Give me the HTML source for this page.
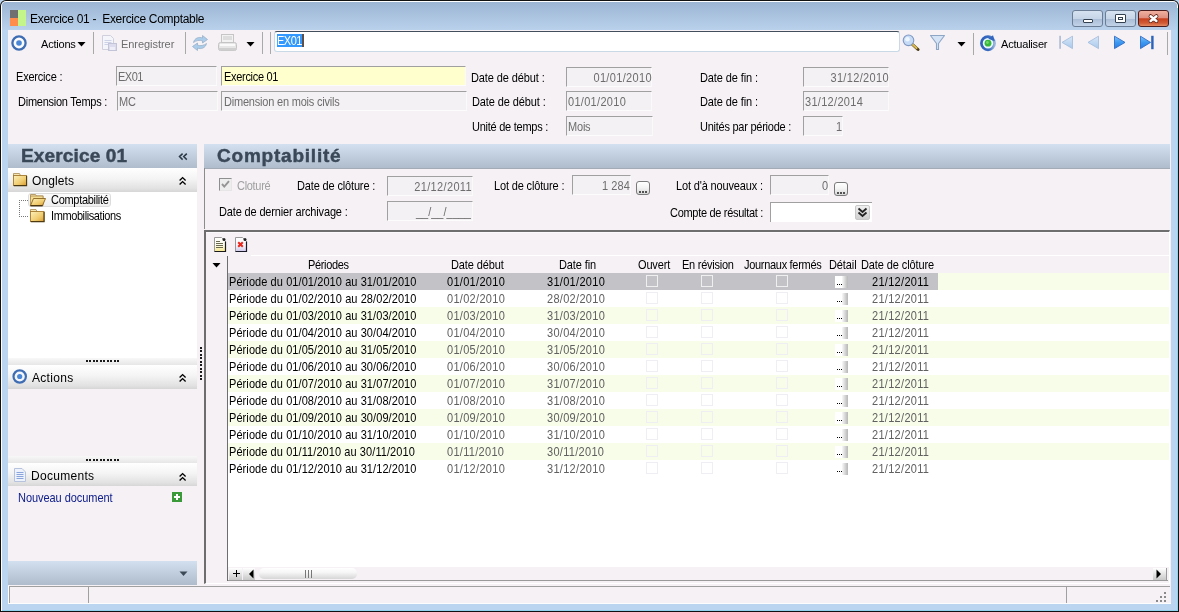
<!DOCTYPE html>
<html><head><meta charset="utf-8">
<style>
html,body{margin:0;padding:0}
body{width:1179px;height:612px;overflow:hidden;position:relative;background:#bbd4ef;font-family:"Liberation Sans",sans-serif;font-size:11px;color:#000}
.a{position:absolute}
.t{position:absolute;white-space:pre;line-height:12px;font-size:11px;will-change:transform;transform:scaleY(1.1);transform-origin:0 10px}
.g{color:#6d6d6d}
.box{position:absolute;box-sizing:border-box;border-top:1px solid #a0a0a0;border-left:1px solid #a0a0a0;border-right:1px solid #fbfafb;border-bottom:1px solid #fdfcfd;background:#f4f1f4}
.hdr{position:absolute;background:linear-gradient(#d3e0ef,#aebccc);}
.sec{position:absolute;background:linear-gradient(#ffffff 0%,#f4f4f4 45%,#e2e2e2 85%,#d6d6d6 100%)}
.sep{position:absolute;width:1px;background:#a9a9a9}
</style></head><body>
<!-- outer frame -->
<div class="a" style="left:0;top:0;width:1179px;height:612px;background:#111;border-radius:6px 6px 0 0"></div>
<div class="a" style="left:1px;top:1px;width:1177px;height:610px;background:#ffffff;border-radius:5px 5px 0 0"></div>
<div class="a" style="left:2px;top:2px;width:1175px;height:608px;background:#bbd4ef;border-radius:4px 4px 0 0"></div>
<div class="a" style="left:2px;top:2px;width:1175px;height:28px;background:linear-gradient(#9cb5d3,#b9d1eb);border-radius:4px 4px 0 0"></div>
<div class="a" style="left:1177px;top:8px;width:1px;height:603px;background:#8fd3ec"></div>
<div class="a" style="left:2px;top:610px;width:1176px;height:1px;background:#8fd3ec"></div>

<!-- title -->
<div class="a" style="left:10px;top:10px;width:8px;height:8px;background:#707070"></div>
<div class="a" style="left:10px;top:18px;width:8px;height:8px;background:#ff8c4a"></div>
<div class="a" style="left:18px;top:10px;width:8px;height:16px;background:#c4f58a"></div>
<div class="t" style="transform:none;left:30px;top:13px;font-size:12px;line-height:13px;letter-spacing:-0.3px;color:#000">Exercice 01 -  Exercice Comptable</div>

<!-- content bg -->
<div class="a" style="left:8px;top:30px;width:1163px;height:574px;background:#f5f1f5"></div>


<!-- toolbar -->
<svg class="a" style="left:10px;top:34px" width="18" height="18" viewBox="0 0 18 18">
 <circle cx="9" cy="9" r="6.6" fill="#fbfbfd" stroke="#3e6db3" stroke-width="2.3"/>
 <circle cx="9" cy="9" r="2.8" fill="#4a86d6"/>
</svg>
<div class="t" style="transform:none;left:41px;top:38px;letter-spacing:-0.2px">Actions</div>
<svg class="a" style="left:77px;top:42px" width="9" height="5"><polygon points="0.5,0 8.5,0 4.5,4.5" fill="#000"/></svg>
<div class="sep" style="left:93px;top:32px;height:22px"></div>
<svg class="a" style="left:100px;top:34px" width="18" height="18" viewBox="0 0 18 18">
 <path d="M2.5 1.5h8l3 3v11h-11z" fill="#f4f4fb" stroke="#d0d0dc"/>
 <path d="M4.5 6.5h7M4.5 8.5h7M4.5 10.5h4" stroke="#cdd2e6"/>
 <rect x="8.5" y="9.5" width="8" height="7" fill="#dcdcee" stroke="#c4c4d8"/>
 <rect x="10" y="13" width="5" height="3" fill="#eeeef8"/>
</svg>
<div class="t g" style="transform:none;left:121px;top:38px;letter-spacing:-0.05px">Enregistrer</div>
<div class="sep" style="left:185px;top:32px;height:22px"></div>
<svg class="a" style="left:191px;top:34px" width="18" height="18" viewBox="0 0 18 18">
 <path d="M2.5 8.5 C3.5 4 8 2.5 11.5 4 L11.5 1.5 L16.5 5.5 L11.5 9 L11.5 6.8 C8.5 5.8 5 6.5 2.5 8.5z" fill="#a9cdea" stroke="#9bb0c8" stroke-width="0.8"/>
 <path d="M15.5 9.5 C14.5 14 10 15.5 6.5 14 L6.5 16.5 L1.5 12.5 L6.5 9 L6.5 11.2 C9.5 12.2 13 11.5 15.5 9.5z" fill="#a9cdea" stroke="#9bb0c8" stroke-width="0.8"/>
</svg>
<svg class="a" style="left:218px;top:34px" width="19" height="18" viewBox="0 0 19 18">
 <rect x="3.5" y="0.5" width="12" height="8" fill="#f2f2f2" stroke="#c6c6c6"/>
 <rect x="5" y="2" width="9" height="4" fill="#dddddd"/>
 <rect x="0.5" y="8.5" width="18" height="8" rx="2" fill="#e6e6e6" stroke="#c4c4c4"/>
 <rect x="2" y="10" width="15" height="2" fill="#fafafa"/>
 <rect x="1" y="14" width="17" height="2.5" fill="#cfcfcf"/>
</svg>
<svg class="a" style="left:246px;top:42px" width="9" height="5"><polygon points="0.5,0 8.5,0 4.5,4.5" fill="#000"/></svg>
<div class="sep" style="left:262px;top:32px;height:22px"></div>
<div class="sep" style="left:270px;top:32px;height:22px"></div>
<div class="a" style="left:274px;top:31px;width:626px;height:21px;box-sizing:border-box;background:#fff;border:1px solid #c9d9e6;border-top-color:#434e5c;border-radius:3px"></div>
<div class="a" style="left:277px;top:34px;width:26px;height:13px;background:#3399ff"></div>
<div class="a" style="left:302px;top:34px;width:2px;height:13px;background:#5e5048"></div>
<div class="t" style="left:277px;top:35px;color:#fff;letter-spacing:-0.5px;font-size:11px">EX01</div>
<svg class="a" style="left:901px;top:33px" width="19" height="19" viewBox="0 0 19 19">
 <line x1="11.5" y1="11.5" x2="17" y2="16.5" stroke="#4b3a14" stroke-width="3" stroke-linecap="round"/>
 <line x1="11" y1="11" x2="15.5" y2="15" stroke="#d8b850" stroke-width="2.2" stroke-linecap="round"/>
 <circle cx="7.5" cy="7.3" r="5.3" fill="#c6dcf6" stroke="#7f98c2" stroke-width="1.1"/>
 <circle cx="6.5" cy="6.3" r="2.3" fill="#eef6ff"/>
</svg>
<svg class="a" style="left:929px;top:34px" width="17" height="17" viewBox="0 0 17 17">
 <path d="M1.5 1.5 H15.5 L9.5 9.5 V15.5 H7.5 V9.5 Z" fill="#d4e4f6" stroke="#8ea6c6" stroke-width="1.1" stroke-linejoin="round"/>
</svg>
<svg class="a" style="left:957px;top:42px" width="9" height="5"><polygon points="0.5,0 8.5,0 4.5,4.5" fill="#000"/></svg>
<div class="sep" style="left:973px;top:33px;height:22px"></div>
<svg class="a" style="left:979px;top:34px" width="18" height="18" viewBox="0 0 18 18">
 <defs><linearGradient id="rg" x1="0" y1="0" x2="1" y2="0"><stop offset="0" stop-color="#2f60b8"/><stop offset="0.6" stop-color="#3a6cc2"/><stop offset="1" stop-color="#9ab6da"/></linearGradient></defs>
 <circle cx="9" cy="9.2" r="6.6" fill="#eaf6ff" stroke="url(#rg)" stroke-width="2.7"/>
 <polygon points="14,1.2 9.2,4.8 15.8,7.2" fill="#3466c0"/>
 <circle cx="9" cy="9.2" r="3.4" fill="#38b83a"/>
 <circle cx="8.4" cy="8.5" r="1.4" fill="#72d86c"/>
</svg>
<div class="t" style="transform:none;left:1001px;top:38px;letter-spacing:-0.2px">Actualiser</div>
<svg class="a" style="left:1058px;top:35px" width="16" height="16" viewBox="0 0 16 16">
 <defs>
 <linearGradient id="na" x1="0" y1="0" x2="0" y2="1"><stop offset="0" stop-color="#7fc2fb"/><stop offset="0.5" stop-color="#3d9af0"/><stop offset="1" stop-color="#2a7ae0"/></linearGradient>
 <linearGradient id="nd" x1="0" y1="0" x2="0" y2="1"><stop offset="0" stop-color="#d8e8f8"/><stop offset="1" stop-color="#a8c8ec"/></linearGradient>
 </defs>
 <rect x="1.2" y="0.8" width="1.8" height="13" fill="#b4c0d8"/>
 <polygon points="14.5,1.2 14.5,13.6 4,7.4" fill="url(#nd)" stroke="#a6bede" stroke-width="0.9" stroke-linejoin="round"/>
</svg>
<svg class="a" style="left:1086px;top:35px" width="16" height="16" viewBox="0 0 16 16">
 <polygon points="12.5,1.2 12.5,13.6 2,7.4" fill="url(#nd)" stroke="#a6bede" stroke-width="0.9" stroke-linejoin="round"/>
</svg>
<svg class="a" style="left:1112px;top:35px" width="16" height="16" viewBox="0 0 16 16">
 <polygon points="2.5,1.2 2.5,13.6 13,7.4" fill="url(#na)" stroke="#2f6cc4" stroke-width="0.9" stroke-linejoin="round"/>
</svg>
<svg class="a" style="left:1139px;top:35px" width="17" height="16" viewBox="0 0 17 16">
 <polygon points="1.5,1.2 1.5,13.6 11.5,7.4" fill="url(#na)" stroke="#2f6cc4" stroke-width="0.9" stroke-linejoin="round"/>
 <rect x="12.2" y="0.8" width="2.4" height="13.4" fill="#2a62bc"/>
</svg>
<div class="sep" style="left:1167px;top:32px;height:23px"></div>

<!-- window buttons -->
<div class="a" style="left:1072px;top:10px;width:31px;height:17px;box-sizing:border-box;border:1px solid #6c7e96;border-radius:3px;background:linear-gradient(#d6e2f0 0%,#c6d5e7 50%,#a9bcd5 52%,#c2d3e8 100%)"></div>
<div class="a" style="left:1083px;top:19px;width:10px;height:4px;box-sizing:border-box;border:1px solid #33404f;background:#fff;border-radius:1px"></div>
<div class="a" style="left:1105px;top:10px;width:31px;height:17px;box-sizing:border-box;border:1px solid #6c7e96;border-radius:3px;background:linear-gradient(#d6e2f0 0%,#c6d5e7 50%,#a9bcd5 52%,#c2d3e8 100%)"></div>
<div class="a" style="left:1115px;top:14px;width:11px;height:9px;box-sizing:border-box;border:1px solid #33404f;background:#fff;border-radius:1px"></div>
<div class="a" style="left:1118px;top:17px;width:5px;height:3px;box-sizing:border-box;border:1px solid #33404f"></div>
<div class="a" style="left:1138px;top:10px;width:31px;height:17px;box-sizing:border-box;border:1px solid #4a1e1e;border-radius:3px;background:linear-gradient(#f0b0a0 0%,#e09080 45%,#c8401e 52%,#d05a34 80%,#e48a64 100%)"></div>
<svg class="a" style="left:1147px;top:13px" width="13" height="11" viewBox="0 0 13 11">
 <path d="M3.6 3.2 L9.4 8 M9.4 3.2 L3.6 8" stroke="#5a2418" stroke-width="4" stroke-linecap="round"/>
 <path d="M3.6 3.2 L9.4 8 M9.4 3.2 L3.6 8" stroke="#ffffff" stroke-width="2.5" stroke-linecap="round"/>
</svg>


<!-- form -->
<div class="t" style="left:16px;top:71px;letter-spacing:-0.2px">Exercice :</div>
<div class="t" style="left:18px;top:96px;letter-spacing:-0.25px">Dimension Temps :</div>
<div class="box" style="left:116px;top:66px;width:101px;height:20px"></div>
<div class="t g" style="left:118px;top:71px;letter-spacing:-0.5px">EX01</div>
<div class="box" style="left:117px;top:91px;width:101px;height:20px"></div>
<div class="t g" style="left:119px;top:96px;letter-spacing:-0.2px">MC</div>
<div class="box" style="left:221px;top:66px;width:245px;height:20px;background:#ffffcd"></div>
<div class="t" style="left:224px;top:71px;letter-spacing:-0.3px">Exercice 01</div>
<div class="box" style="left:221px;top:91px;width:246px;height:20px"></div>
<div class="t g" style="left:224px;top:96px;letter-spacing:-0.2px">Dimension en mois civils</div>

<div class="t" style="left:471px;top:72px;letter-spacing:-0.1px">Date de début :</div>
<div class="t" style="left:472px;top:96px;letter-spacing:-0.1px">Date de début :</div>
<div class="t" style="left:472px;top:121px;letter-spacing:-0.25px">Unité de temps :</div>
<div class="box" style="left:566px;top:67px;width:86px;height:20px"></div>
<div class="t g" style="left:566px;top:72px;width:86px;text-align:right;letter-spacing:0.35px">01/01/2010</div>
<div class="box" style="left:566px;top:91px;width:86px;height:20px"></div>
<div class="t g" style="left:568px;top:96px;letter-spacing:0.3px">01/01/2010</div>
<div class="box" style="left:566px;top:116px;width:87px;height:20px"></div>
<div class="t g" style="left:568px;top:121px;letter-spacing:-0.2px">Mois</div>

<div class="t" style="left:700px;top:72px;letter-spacing:-0.1px">Date de fin :</div>
<div class="t" style="left:700px;top:96px;letter-spacing:-0.1px">Date de fin :</div>
<div class="t" style="left:700px;top:121px;letter-spacing:-0.25px">Unités par période :</div>
<div class="box" style="left:803px;top:67px;width:86px;height:20px"></div>
<div class="t g" style="left:803px;top:72px;width:86px;text-align:right;letter-spacing:0.35px">31/12/2010</div>
<div class="box" style="left:803px;top:91px;width:86px;height:20px"></div>
<div class="t g" style="left:805px;top:96px;letter-spacing:0.3px">31/12/2014</div>
<div class="box" style="left:803px;top:116px;width:40px;height:20px"></div>
<div class="t g" style="left:803px;top:121px;width:39px;text-align:right">1</div>


<!-- left panel -->
<div class="hdr" style="left:8px;top:144px;width:189px;height:24px"></div>
<div class="t" style="transform:none;left:21px;top:145px;font-size:19px;line-height:21px;font-weight:bold;color:#3a4858;letter-spacing:0.15px;-webkit-text-stroke:0.45px #3a4858">Exercice 01</div>
<svg class="a" style="left:178px;top:152px" width="10" height="9" viewBox="0 0 10 9">
 <path d="M4.6 1.6 L1.5 4.6 L4.6 7.6 M8.8 1.6 L5.7 4.6 L8.8 7.6" fill="none" stroke="#2c3a48" stroke-width="1.5"/>
</svg>
<div class="sec" style="left:8px;top:168px;width:189px;height:24px"></div>
<svg class="a" style="left:13px;top:173px" width="15" height="14" viewBox="0 0 15 14">
 <defs><linearGradient id="fg" x1="0" y1="0" x2="1" y2="1"><stop offset="0" stop-color="#fcf0bc"/><stop offset="0.6" stop-color="#f0cc70"/><stop offset="1" stop-color="#d99a30"/></linearGradient></defs>
 <path d="M0.5 0.5 H6.5 L7.5 2.5 V3 H0.5 Z" fill="#f6e6b4" stroke="#a88a50" stroke-width="0.8"/>
 <rect x="0.5" y="2.5" width="13" height="10" fill="url(#fg)" stroke="#a47a30" stroke-width="0.9"/>
 <path d="M0.8 12.6 H13.6 V3" fill="none" stroke="#4e3a10" stroke-width="1.1"/>
</svg>
<div class="t" style="transform:none;left:32px;top:175px;font-size:12px;line-height:13px;letter-spacing:0.1px">Onglets</div>
<svg class="a" style="left:178px;top:176px" width="10" height="10" viewBox="0 0 10 10">
 <path d="M1.6 4.6 L4.6 1.6 L7.6 4.6 M1.6 8.6 L4.6 5.6 L7.6 8.6" fill="none" stroke="#000" stroke-width="1.35"/>
</svg>
<div class="a" style="left:8px;top:192px;width:189px;height:166px;background:#fff"></div>
<div class="a" style="left:28px;top:193px;width:83px;height:14px;box-sizing:border-box;border:1px solid #dcdcdc;border-radius:3px;background:linear-gradient(#fbfbfb,#efefef)"></div>
<div class="a" style="left:19px;top:200px;width:1px;height:17px;background:repeating-linear-gradient(#777 0 1px,transparent 1px 2px)"></div>
<div class="a" style="left:19px;top:200px;width:10px;height:1px;background:repeating-linear-gradient(90deg,#777 0 1px,transparent 1px 2px)"></div>
<div class="a" style="left:19px;top:216px;width:10px;height:1px;background:repeating-linear-gradient(90deg,#777 0 1px,transparent 1px 2px)"></div>
<svg class="a" style="left:29px;top:193px" width="18" height="14" viewBox="0 0 18 14">
 <path d="M1.5 1.5 H6.5 L7.5 3 H14 V6 H1.5 Z" fill="#f8e8b0" stroke="#a88a50" stroke-width="0.8"/>
 <rect x="1.5" y="3" width="12.5" height="9.5" fill="#f4dc90" stroke="#a88a50" stroke-width="0.8"/>
 <path d="M1.5 12.5 L4.5 5.5 H16.5 L13.5 12.5 Z" fill="url(#fg)" stroke="#8a6420" stroke-width="0.9"/>
 <path d="M1.5 12.8 H13.6" stroke="#3a2a08" stroke-width="1.2"/>
</svg>
<div class="t" style="left:51px;top:194px;letter-spacing:-0.3px">Comptabilité</div>
<svg class="a" style="left:29px;top:209px" width="17" height="14" viewBox="0 0 17 14">
 <path d="M1.5 0.5 H7 L8 2.5 V3 H1.5 Z" fill="#f6e6b4" stroke="#a88a50" stroke-width="0.8"/>
 <rect x="1.5" y="2.5" width="13.5" height="10" fill="url(#fg)" stroke="#a47a30" stroke-width="0.9"/>
 <path d="M1.8 12.6 H15.1 V3" fill="none" stroke="#4e3a10" stroke-width="1.1"/>
</svg>
<div class="t" style="left:51px;top:210px;letter-spacing:-0.4px">Immobilisations</div>

<div class="sec" style="left:8px;top:358px;width:189px;height:7px;background:linear-gradient(#f8f8f8,#e6e6e6)"></div>
<div class="a" style="left:86px;top:360px;width:2px;height:2px;background:#1a1a1a"></div><div class="a" style="left:89px;top:360px;width:2px;height:2px;background:#1a1a1a"></div><div class="a" style="left:93px;top:360px;width:2px;height:2px;background:#1a1a1a"></div><div class="a" style="left:96px;top:360px;width:2px;height:2px;background:#1a1a1a"></div><div class="a" style="left:100px;top:360px;width:2px;height:2px;background:#1a1a1a"></div><div class="a" style="left:103px;top:360px;width:2px;height:2px;background:#1a1a1a"></div><div class="a" style="left:107px;top:360px;width:2px;height:2px;background:#1a1a1a"></div><div class="a" style="left:110px;top:360px;width:2px;height:2px;background:#1a1a1a"></div><div class="a" style="left:114px;top:360px;width:2px;height:2px;background:#1a1a1a"></div><div class="a" style="left:117px;top:360px;width:2px;height:2px;background:#1a1a1a"></div>
<div class="sec" style="left:8px;top:365px;width:189px;height:24px"></div>
<svg class="a" style="left:12px;top:369px" width="16" height="16" viewBox="0 0 16 16">
 <circle cx="7.7" cy="7.5" r="6.2" fill="#f4f6fb" stroke="#3e6db3" stroke-width="2.2"/>
 <circle cx="7.7" cy="7.5" r="2.6" fill="#4a86d6"/>
</svg>
<div class="t" style="transform:none;left:32px;top:372px;font-size:12px;line-height:13px;letter-spacing:0.3px">Actions</div>
<svg class="a" style="left:178px;top:373px" width="10" height="10" viewBox="0 0 10 10">
 <path d="M1.6 4.6 L4.6 1.6 L7.6 4.6 M1.6 8.6 L4.6 5.6 L7.6 8.6" fill="none" stroke="#000" stroke-width="1.35"/>
</svg>
<div class="sec" style="left:8px;top:456px;width:189px;height:7px;background:linear-gradient(#f8f8f8,#e6e6e6)"></div>
<div class="a" style="left:86px;top:459px;width:2px;height:2px;background:#1a1a1a"></div><div class="a" style="left:89px;top:459px;width:2px;height:2px;background:#1a1a1a"></div><div class="a" style="left:93px;top:459px;width:2px;height:2px;background:#1a1a1a"></div><div class="a" style="left:96px;top:459px;width:2px;height:2px;background:#1a1a1a"></div><div class="a" style="left:100px;top:459px;width:2px;height:2px;background:#1a1a1a"></div><div class="a" style="left:103px;top:459px;width:2px;height:2px;background:#1a1a1a"></div><div class="a" style="left:107px;top:459px;width:2px;height:2px;background:#1a1a1a"></div><div class="a" style="left:110px;top:459px;width:2px;height:2px;background:#1a1a1a"></div><div class="a" style="left:114px;top:459px;width:2px;height:2px;background:#1a1a1a"></div><div class="a" style="left:117px;top:459px;width:2px;height:2px;background:#1a1a1a"></div>
<div class="sec" style="left:8px;top:463px;width:189px;height:23px"></div>
<svg class="a" style="left:13px;top:467px" width="14" height="16" viewBox="0 0 14 16">
 <path d="M1.5 1.5 H9 L12.5 5 V14.5 H1.5 Z" fill="#eef2fb" stroke="#b7c3dc" stroke-width="1"/>
 <path d="M3.5 5.5 H10.5 M3.5 7.5 H10.5 M3.5 9.5 H10.5 M3.5 11.5 H10.5" stroke="#8aa4dc" stroke-width="1"/>
</svg>
<div class="t" style="transform:none;left:31px;top:470px;font-size:12px;line-height:13px;letter-spacing:0.3px">Documents</div>
<svg class="a" style="left:178px;top:472px" width="10" height="10" viewBox="0 0 10 10">
 <path d="M1.6 4.6 L4.6 1.6 L7.6 4.6 M1.6 8.6 L4.6 5.6 L7.6 8.6" fill="none" stroke="#000" stroke-width="1.35"/>
</svg>
<div class="t" style="left:18px;top:492px;color:#12208c;letter-spacing:-0.05px">Nouveau document</div>
<div class="a" style="left:172px;top:492px;width:10px;height:10px;background:#3a9a3a;border:0px solid #2a7a2a"></div>
<div class="a" style="left:176px;top:494px;width:2px;height:6px;background:#fff"></div>
<div class="a" style="left:174px;top:496px;width:6px;height:2px;background:#fff"></div>
<div class="hdr" style="left:8px;top:561px;width:189px;height:24px"></div>
<svg class="a" style="left:179px;top:571px" width="10" height="6"><polygon points="0.5,0.5 8.5,0.5 4.5,5" fill="#3c4a58"/></svg>
<div class="a" style="left:200px;top:347px;width:2px;height:2px;background:#1a1a1a"></div><div class="a" style="left:200px;top:350px;width:2px;height:2px;background:#1a1a1a"></div><div class="a" style="left:200px;top:354px;width:2px;height:2px;background:#1a1a1a"></div><div class="a" style="left:200px;top:357px;width:2px;height:2px;background:#1a1a1a"></div><div class="a" style="left:200px;top:361px;width:2px;height:2px;background:#1a1a1a"></div><div class="a" style="left:200px;top:364px;width:2px;height:2px;background:#1a1a1a"></div><div class="a" style="left:200px;top:368px;width:2px;height:2px;background:#1a1a1a"></div><div class="a" style="left:200px;top:371px;width:2px;height:2px;background:#1a1a1a"></div><div class="a" style="left:200px;top:375px;width:2px;height:2px;background:#1a1a1a"></div><div class="a" style="left:200px;top:378px;width:2px;height:2px;background:#1a1a1a"></div>


<!-- right panel -->
<div class="hdr" style="left:204px;top:144px;width:966px;height:24px"></div>
<div class="a" style="left:204px;top:168px;width:966px;height:1px;background:#a3abb6"></div>
<div class="t" style="transform:none;left:217px;top:145px;font-size:19px;line-height:21px;font-weight:bold;color:#3a4858;letter-spacing:0.78px;-webkit-text-stroke:0.45px #3a4858">Comptabilité</div>
<div class="a" style="left:204px;top:168px;width:1px;height:61px;background:#8c8c8c"></div>
<div class="a" style="left:219px;top:178px;width:13px;height:13px;box-sizing:border-box;border:1px solid #e6e6e6;border-top-color:#8e8e8e;border-left-color:#8e8e8e;background:#ededed"></div>
<svg class="a" style="left:219px;top:178px" width="13" height="13" viewBox="0 0 13 13"><path d="M3 6 L5.3 8.6 L10 3.2" fill="none" stroke="#959595" stroke-width="1.9"/></svg>
<div class="t" style="left:237px;top:180px;color:#a0a0a0;letter-spacing:-0.3px">Cloturé</div>
<div class="t" style="left:297px;top:180px;letter-spacing:-0.15px">Date de clôture :</div>
<div class="box" style="left:387px;top:176px;width:86px;height:20px"></div>
<div class="t g" style="left:387px;top:181px;width:85px;text-align:right;letter-spacing:0.35px">21/12/2011</div>
<div class="t" style="left:219px;top:206px;letter-spacing:-0.15px">Date de dernier archivage :</div>
<div class="box" style="left:387px;top:201px;width:86px;height:20px"></div>
<div class="t g" style="left:387px;top:206px;width:84px;text-align:right;letter-spacing:0px">__/__/____</div>
<div class="t" style="left:494px;top:180px;letter-spacing:-0.15px">Lot de clôture :</div>
<div class="box" style="left:572px;top:175px;width:59px;height:20px"></div>
<div class="t g" style="left:572px;top:180px;width:58px;text-align:right;letter-spacing:0.1px">1 284</div>
<div class="a" style="left:636px;top:181px;width:14px;height:14px;box-sizing:border-box;border:1px solid #7a7a7a;border-radius:3px;background:linear-gradient(#ffffff 0%,#f4f4f4 45%,#d8d8d8 100%)"></div><div class="a" style="left:639px;top:191px;width:2px;height:2px;background:#222;border-radius:1px"></div><div class="a" style="left:642px;top:191px;width:2px;height:2px;background:#222;border-radius:1px"></div><div class="a" style="left:645px;top:191px;width:2px;height:2px;background:#222;border-radius:1px"></div>
<div class="t" style="left:676px;top:180px;letter-spacing:-0.15px">Lot d'à nouveaux :</div>
<div class="box" style="left:770px;top:175px;width:59px;height:20px"></div>
<div class="t g" style="left:770px;top:180px;width:58px;text-align:right">0</div>
<div class="a" style="left:834px;top:182px;width:14px;height:14px;box-sizing:border-box;border:1px solid #7a7a7a;border-radius:3px;background:linear-gradient(#ffffff 0%,#f4f4f4 45%,#d8d8d8 100%)"></div><div class="a" style="left:837px;top:192px;width:2px;height:2px;background:#222;border-radius:1px"></div><div class="a" style="left:840px;top:192px;width:2px;height:2px;background:#222;border-radius:1px"></div><div class="a" style="left:843px;top:192px;width:2px;height:2px;background:#222;border-radius:1px"></div>
<div class="t" style="left:670px;top:207px;letter-spacing:-0.3px">Compte de résultat :</div>
<div class="a" style="left:770px;top:202px;width:102px;height:20px;box-sizing:border-box;border-top:1px solid #a0a0a0;border-left:1px solid #a0a0a0;background:#fff"></div>
<div class="a" style="left:855px;top:205px;width:15px;height:15px;box-sizing:border-box;border:1px solid #c8c8c8;border-radius:2px;background:linear-gradient(#f0f0f0,#cfcfcf)"></div>
<svg class="a" style="left:856px;top:206px" width="13" height="13" viewBox="0 0 13 13">
 <path d="M2.5 2.5 L6.5 6 L10.5 2.5 M2.5 6.5 L6.5 10 L10.5 6.5" fill="none" stroke="#222" stroke-width="1.8"/>
</svg>

<!-- grid -->
<div class="a" style="left:204px;top:230px;width:966px;height:354px;box-sizing:border-box;border-top:2px solid #6e6e6e;border-left:2px solid #6e6e6e;border-right:1px solid #fff;border-bottom:1px solid #fff;background:#f5f1f5"></div>
<div class="a" style="left:206px;top:232px;width:963px;height:1px;background:#fbf9fb"></div>
<svg class="a" style="left:213px;top:236px" width="14" height="17" viewBox="0 0 14 17">
 <defs><linearGradient id="dy" x1="0" y1="0" x2="0" y2="1"><stop offset="0" stop-color="#ffffff"/><stop offset="0.55" stop-color="#fdfbe8"/><stop offset="1" stop-color="#f6e88a"/></linearGradient>
 <linearGradient id="dp" x1="0" y1="0" x2="0" y2="1"><stop offset="0" stop-color="#ffffff"/><stop offset="0.6" stop-color="#f4f2fb"/><stop offset="1" stop-color="#cfc8ea"/></linearGradient></defs>
 <path d="M1.5 1.5 H8.5 L12.5 5.5 V15.5 H1.5 Z" fill="url(#dy)" stroke="#9a9a9a" stroke-width="1"/>
 <path d="M12.5 5.5 V15.5 H1.5" fill="none" stroke="#1a1a1a" stroke-width="1.2"/>
 <circle cx="11" cy="3.5" r="1.5" fill="#222"/>
 <path d="M3 5.5 H7 M3 7.5 H10 M3 9.5 H10 M3 11.5 H10" stroke="#6a6a50" stroke-width="1"/>
</svg>
<svg class="a" style="left:234px;top:236px" width="14" height="17" viewBox="0 0 14 17">
 <path d="M1.5 1.5 H8.5 L12.5 5.5 V15.5 H1.5 Z" fill="url(#dp)" stroke="#9a9a9a" stroke-width="1"/>
 <path d="M12.5 5.5 V15.5 H1.5" fill="none" stroke="#1a1a2a" stroke-width="1.2"/>
 <circle cx="11" cy="3.5" r="1.5" fill="#222"/>
 <path d="M4.2 6.2 L8.8 10.8 M8.8 6.2 L4.2 10.8" stroke="#e8281c" stroke-width="2"/>
</svg>
<div class="a" style="left:251px;top:255px;width:918px;height:1px;background:#ffffff"></div>
<svg class="a" style="left:212px;top:263px" width="9" height="5"><polygon points="0.5,0 8.5,0 4.5,4.5" fill="#000"/></svg>
<div class="a" style="left:227px;top:256px;width:1px;height:325px;background:#6e6e6e"></div>
<div class="t" style="left:308px;top:259px;letter-spacing:-0.35px">Périodes</div>
<div class="t" style="left:451px;top:259px;letter-spacing:-0.1px">Date début</div>
<div class="t" style="left:559px;top:259px;letter-spacing:-0.1px">Date fin</div>
<div class="t" style="left:638px;top:259px;letter-spacing:-0.15px">Ouvert</div>
<div class="t" style="left:682px;top:259px;letter-spacing:-0.25px">En révision</div>
<div class="t" style="left:744px;top:259px;letter-spacing:-0.3px">Journaux fermés</div>
<div class="t" style="left:829px;top:259px;letter-spacing:-0.1px">Détail</div>
<div class="t" style="left:861px;top:259px;letter-spacing:-0.1px">Date de clôture</div>
<div class="a" style="left:228px;top:273px;width:941px;height:294px;background:#fff"></div>
<div class="a" style="left:228px;top:273px;width:941px;height:17px;background:#f8fde9"></div>
<div class="a" style="left:228px;top:273px;width:710px;height:17px;background:#c3c2c7"></div>
<div class="t" style="left:229px;top:276px;letter-spacing:0.08px">Période du 01/01/2010 au 31/01/2010</div>
<div class="t" style="left:447px;top:276px;color:#000;letter-spacing:0.3px">01/01/2010</div>
<div class="t" style="left:547px;top:276px;color:#000;letter-spacing:0.3px">31/01/2010</div>
<div class="a" style="left:646px;top:275px;width:12px;height:12px;box-sizing:border-box;border:1px solid #efefef"></div>
<div class="a" style="left:701px;top:275px;width:12px;height:12px;box-sizing:border-box;border:1px solid #efefef"></div>
<div class="a" style="left:776px;top:275px;width:12px;height:12px;box-sizing:border-box;border:1px solid #efefef"></div>
<div class="a" style="left:835px;top:276px;width:13px;height:12px;background:linear-gradient(90deg,#ffffff 0%,#ffffff 50%,#c4c4c4 90%,#b8b8b8 100%)"></div><div class="a" style="left:837px;top:284px;width:1px;height:1px;background:#000"></div><div class="a" style="left:839px;top:284px;width:1px;height:1px;background:#000"></div><div class="a" style="left:841px;top:284px;width:1px;height:1px;background:#000"></div>
<div class="t" style="left:872px;top:276px;color:#000;letter-spacing:0.3px">21/12/2011</div>
<div class="t" style="left:229px;top:293px;letter-spacing:0.08px">Période du 01/02/2010 au 28/02/2010</div>
<div class="t" style="left:447px;top:293px;color:#606060;letter-spacing:0.3px">01/02/2010</div>
<div class="t" style="left:547px;top:293px;color:#606060;letter-spacing:0.3px">28/02/2010</div>
<div class="a" style="left:646px;top:292px;width:12px;height:12px;box-sizing:border-box;border:1px solid #eeeef3"></div>
<div class="a" style="left:701px;top:292px;width:12px;height:12px;box-sizing:border-box;border:1px solid #eeeef3"></div>
<div class="a" style="left:776px;top:292px;width:12px;height:12px;box-sizing:border-box;border:1px solid #eeeef3"></div>
<div class="a" style="left:835px;top:293px;width:13px;height:12px;background:linear-gradient(90deg,#ffffff 0%,#ffffff 50%,#c4c4c4 90%,#b8b8b8 100%)"></div><div class="a" style="left:837px;top:301px;width:1px;height:1px;background:#000"></div><div class="a" style="left:839px;top:301px;width:1px;height:1px;background:#000"></div><div class="a" style="left:841px;top:301px;width:1px;height:1px;background:#000"></div>
<div class="t" style="left:872px;top:293px;color:#606060;letter-spacing:0.3px">21/12/2011</div>
<div class="a" style="left:228px;top:307px;width:941px;height:17px;background:#f8fde9"></div>
<div class="t" style="left:229px;top:310px;letter-spacing:0.08px">Période du 01/03/2010 au 31/03/2010</div>
<div class="t" style="left:447px;top:310px;color:#606060;letter-spacing:0.3px">01/03/2010</div>
<div class="t" style="left:547px;top:310px;color:#606060;letter-spacing:0.3px">31/03/2010</div>
<div class="a" style="left:646px;top:309px;width:12px;height:12px;box-sizing:border-box;border:1px solid #eeeef3"></div>
<div class="a" style="left:701px;top:309px;width:12px;height:12px;box-sizing:border-box;border:1px solid #eeeef3"></div>
<div class="a" style="left:776px;top:309px;width:12px;height:12px;box-sizing:border-box;border:1px solid #eeeef3"></div>
<div class="a" style="left:835px;top:310px;width:13px;height:12px;background:linear-gradient(90deg,#ffffff 0%,#ffffff 50%,#c4c4c4 90%,#b8b8b8 100%)"></div><div class="a" style="left:837px;top:318px;width:1px;height:1px;background:#000"></div><div class="a" style="left:839px;top:318px;width:1px;height:1px;background:#000"></div><div class="a" style="left:841px;top:318px;width:1px;height:1px;background:#000"></div>
<div class="t" style="left:872px;top:310px;color:#606060;letter-spacing:0.3px">21/12/2011</div>
<div class="t" style="left:229px;top:327px;letter-spacing:0.08px">Période du 01/04/2010 au 30/04/2010</div>
<div class="t" style="left:447px;top:327px;color:#606060;letter-spacing:0.3px">01/04/2010</div>
<div class="t" style="left:547px;top:327px;color:#606060;letter-spacing:0.3px">30/04/2010</div>
<div class="a" style="left:646px;top:326px;width:12px;height:12px;box-sizing:border-box;border:1px solid #eeeef3"></div>
<div class="a" style="left:701px;top:326px;width:12px;height:12px;box-sizing:border-box;border:1px solid #eeeef3"></div>
<div class="a" style="left:776px;top:326px;width:12px;height:12px;box-sizing:border-box;border:1px solid #eeeef3"></div>
<div class="a" style="left:835px;top:327px;width:13px;height:12px;background:linear-gradient(90deg,#ffffff 0%,#ffffff 50%,#c4c4c4 90%,#b8b8b8 100%)"></div><div class="a" style="left:837px;top:335px;width:1px;height:1px;background:#000"></div><div class="a" style="left:839px;top:335px;width:1px;height:1px;background:#000"></div><div class="a" style="left:841px;top:335px;width:1px;height:1px;background:#000"></div>
<div class="t" style="left:872px;top:327px;color:#606060;letter-spacing:0.3px">21/12/2011</div>
<div class="a" style="left:228px;top:341px;width:941px;height:17px;background:#f8fde9"></div>
<div class="t" style="left:229px;top:344px;letter-spacing:0.08px">Période du 01/05/2010 au 31/05/2010</div>
<div class="t" style="left:447px;top:344px;color:#606060;letter-spacing:0.3px">01/05/2010</div>
<div class="t" style="left:547px;top:344px;color:#606060;letter-spacing:0.3px">31/05/2010</div>
<div class="a" style="left:646px;top:343px;width:12px;height:12px;box-sizing:border-box;border:1px solid #eeeef3"></div>
<div class="a" style="left:701px;top:343px;width:12px;height:12px;box-sizing:border-box;border:1px solid #eeeef3"></div>
<div class="a" style="left:776px;top:343px;width:12px;height:12px;box-sizing:border-box;border:1px solid #eeeef3"></div>
<div class="a" style="left:835px;top:344px;width:13px;height:12px;background:linear-gradient(90deg,#ffffff 0%,#ffffff 50%,#c4c4c4 90%,#b8b8b8 100%)"></div><div class="a" style="left:837px;top:352px;width:1px;height:1px;background:#000"></div><div class="a" style="left:839px;top:352px;width:1px;height:1px;background:#000"></div><div class="a" style="left:841px;top:352px;width:1px;height:1px;background:#000"></div>
<div class="t" style="left:872px;top:344px;color:#606060;letter-spacing:0.3px">21/12/2011</div>
<div class="t" style="left:229px;top:361px;letter-spacing:0.08px">Période du 01/06/2010 au 30/06/2010</div>
<div class="t" style="left:447px;top:361px;color:#606060;letter-spacing:0.3px">01/06/2010</div>
<div class="t" style="left:547px;top:361px;color:#606060;letter-spacing:0.3px">30/06/2010</div>
<div class="a" style="left:646px;top:360px;width:12px;height:12px;box-sizing:border-box;border:1px solid #eeeef3"></div>
<div class="a" style="left:701px;top:360px;width:12px;height:12px;box-sizing:border-box;border:1px solid #eeeef3"></div>
<div class="a" style="left:776px;top:360px;width:12px;height:12px;box-sizing:border-box;border:1px solid #eeeef3"></div>
<div class="a" style="left:835px;top:361px;width:13px;height:12px;background:linear-gradient(90deg,#ffffff 0%,#ffffff 50%,#c4c4c4 90%,#b8b8b8 100%)"></div><div class="a" style="left:837px;top:369px;width:1px;height:1px;background:#000"></div><div class="a" style="left:839px;top:369px;width:1px;height:1px;background:#000"></div><div class="a" style="left:841px;top:369px;width:1px;height:1px;background:#000"></div>
<div class="t" style="left:872px;top:361px;color:#606060;letter-spacing:0.3px">21/12/2011</div>
<div class="a" style="left:228px;top:375px;width:941px;height:17px;background:#f8fde9"></div>
<div class="t" style="left:229px;top:378px;letter-spacing:0.08px">Période du 01/07/2010 au 31/07/2010</div>
<div class="t" style="left:447px;top:378px;color:#606060;letter-spacing:0.3px">01/07/2010</div>
<div class="t" style="left:547px;top:378px;color:#606060;letter-spacing:0.3px">31/07/2010</div>
<div class="a" style="left:646px;top:377px;width:12px;height:12px;box-sizing:border-box;border:1px solid #eeeef3"></div>
<div class="a" style="left:701px;top:377px;width:12px;height:12px;box-sizing:border-box;border:1px solid #eeeef3"></div>
<div class="a" style="left:776px;top:377px;width:12px;height:12px;box-sizing:border-box;border:1px solid #eeeef3"></div>
<div class="a" style="left:835px;top:378px;width:13px;height:12px;background:linear-gradient(90deg,#ffffff 0%,#ffffff 50%,#c4c4c4 90%,#b8b8b8 100%)"></div><div class="a" style="left:837px;top:386px;width:1px;height:1px;background:#000"></div><div class="a" style="left:839px;top:386px;width:1px;height:1px;background:#000"></div><div class="a" style="left:841px;top:386px;width:1px;height:1px;background:#000"></div>
<div class="t" style="left:872px;top:378px;color:#606060;letter-spacing:0.3px">21/12/2011</div>
<div class="t" style="left:229px;top:395px;letter-spacing:0.08px">Période du 01/08/2010 au 31/08/2010</div>
<div class="t" style="left:447px;top:395px;color:#606060;letter-spacing:0.3px">01/08/2010</div>
<div class="t" style="left:547px;top:395px;color:#606060;letter-spacing:0.3px">31/08/2010</div>
<div class="a" style="left:646px;top:394px;width:12px;height:12px;box-sizing:border-box;border:1px solid #eeeef3"></div>
<div class="a" style="left:701px;top:394px;width:12px;height:12px;box-sizing:border-box;border:1px solid #eeeef3"></div>
<div class="a" style="left:776px;top:394px;width:12px;height:12px;box-sizing:border-box;border:1px solid #eeeef3"></div>
<div class="a" style="left:835px;top:395px;width:13px;height:12px;background:linear-gradient(90deg,#ffffff 0%,#ffffff 50%,#c4c4c4 90%,#b8b8b8 100%)"></div><div class="a" style="left:837px;top:403px;width:1px;height:1px;background:#000"></div><div class="a" style="left:839px;top:403px;width:1px;height:1px;background:#000"></div><div class="a" style="left:841px;top:403px;width:1px;height:1px;background:#000"></div>
<div class="t" style="left:872px;top:395px;color:#606060;letter-spacing:0.3px">21/12/2011</div>
<div class="a" style="left:228px;top:409px;width:941px;height:17px;background:#f8fde9"></div>
<div class="t" style="left:229px;top:412px;letter-spacing:0.08px">Période du 01/09/2010 au 30/09/2010</div>
<div class="t" style="left:447px;top:412px;color:#606060;letter-spacing:0.3px">01/09/2010</div>
<div class="t" style="left:547px;top:412px;color:#606060;letter-spacing:0.3px">30/09/2010</div>
<div class="a" style="left:646px;top:411px;width:12px;height:12px;box-sizing:border-box;border:1px solid #eeeef3"></div>
<div class="a" style="left:701px;top:411px;width:12px;height:12px;box-sizing:border-box;border:1px solid #eeeef3"></div>
<div class="a" style="left:776px;top:411px;width:12px;height:12px;box-sizing:border-box;border:1px solid #eeeef3"></div>
<div class="a" style="left:835px;top:412px;width:13px;height:12px;background:linear-gradient(90deg,#ffffff 0%,#ffffff 50%,#c4c4c4 90%,#b8b8b8 100%)"></div><div class="a" style="left:837px;top:420px;width:1px;height:1px;background:#000"></div><div class="a" style="left:839px;top:420px;width:1px;height:1px;background:#000"></div><div class="a" style="left:841px;top:420px;width:1px;height:1px;background:#000"></div>
<div class="t" style="left:872px;top:412px;color:#606060;letter-spacing:0.3px">21/12/2011</div>
<div class="t" style="left:229px;top:429px;letter-spacing:0.08px">Période du 01/10/2010 au 31/10/2010</div>
<div class="t" style="left:447px;top:429px;color:#606060;letter-spacing:0.3px">01/10/2010</div>
<div class="t" style="left:547px;top:429px;color:#606060;letter-spacing:0.3px">31/10/2010</div>
<div class="a" style="left:646px;top:428px;width:12px;height:12px;box-sizing:border-box;border:1px solid #eeeef3"></div>
<div class="a" style="left:701px;top:428px;width:12px;height:12px;box-sizing:border-box;border:1px solid #eeeef3"></div>
<div class="a" style="left:776px;top:428px;width:12px;height:12px;box-sizing:border-box;border:1px solid #eeeef3"></div>
<div class="a" style="left:835px;top:429px;width:13px;height:12px;background:linear-gradient(90deg,#ffffff 0%,#ffffff 50%,#c4c4c4 90%,#b8b8b8 100%)"></div><div class="a" style="left:837px;top:437px;width:1px;height:1px;background:#000"></div><div class="a" style="left:839px;top:437px;width:1px;height:1px;background:#000"></div><div class="a" style="left:841px;top:437px;width:1px;height:1px;background:#000"></div>
<div class="t" style="left:872px;top:429px;color:#606060;letter-spacing:0.3px">21/12/2011</div>
<div class="a" style="left:228px;top:443px;width:941px;height:17px;background:#f8fde9"></div>
<div class="t" style="left:229px;top:446px;letter-spacing:0.08px">Période du 01/11/2010 au 30/11/2010</div>
<div class="t" style="left:447px;top:446px;color:#606060;letter-spacing:0.3px">01/11/2010</div>
<div class="t" style="left:547px;top:446px;color:#606060;letter-spacing:0.3px">30/11/2010</div>
<div class="a" style="left:646px;top:445px;width:12px;height:12px;box-sizing:border-box;border:1px solid #eeeef3"></div>
<div class="a" style="left:701px;top:445px;width:12px;height:12px;box-sizing:border-box;border:1px solid #eeeef3"></div>
<div class="a" style="left:776px;top:445px;width:12px;height:12px;box-sizing:border-box;border:1px solid #eeeef3"></div>
<div class="a" style="left:835px;top:446px;width:13px;height:12px;background:linear-gradient(90deg,#ffffff 0%,#ffffff 50%,#c4c4c4 90%,#b8b8b8 100%)"></div><div class="a" style="left:837px;top:454px;width:1px;height:1px;background:#000"></div><div class="a" style="left:839px;top:454px;width:1px;height:1px;background:#000"></div><div class="a" style="left:841px;top:454px;width:1px;height:1px;background:#000"></div>
<div class="t" style="left:872px;top:446px;color:#606060;letter-spacing:0.3px">21/12/2011</div>
<div class="t" style="left:229px;top:463px;letter-spacing:0.08px">Période du 01/12/2010 au 31/12/2010</div>
<div class="t" style="left:447px;top:463px;color:#606060;letter-spacing:0.3px">01/12/2010</div>
<div class="t" style="left:547px;top:463px;color:#606060;letter-spacing:0.3px">31/12/2010</div>
<div class="a" style="left:646px;top:462px;width:12px;height:12px;box-sizing:border-box;border:1px solid #eeeef3"></div>
<div class="a" style="left:701px;top:462px;width:12px;height:12px;box-sizing:border-box;border:1px solid #eeeef3"></div>
<div class="a" style="left:776px;top:462px;width:12px;height:12px;box-sizing:border-box;border:1px solid #eeeef3"></div>
<div class="a" style="left:835px;top:463px;width:13px;height:12px;background:linear-gradient(90deg,#ffffff 0%,#ffffff 50%,#c4c4c4 90%,#b8b8b8 100%)"></div><div class="a" style="left:837px;top:471px;width:1px;height:1px;background:#000"></div><div class="a" style="left:839px;top:471px;width:1px;height:1px;background:#000"></div><div class="a" style="left:841px;top:471px;width:1px;height:1px;background:#000"></div>
<div class="t" style="left:872px;top:463px;color:#606060;letter-spacing:0.3px">21/12/2011</div>
<div class="a" style="left:228px;top:567px;width:940px;height:14px;background:#f5f1f5;border-bottom:1px solid #9a9a9a;box-sizing:border-box"></div>
<div class="a" style="left:229px;top:568px;width:13px;height:12px;background:linear-gradient(#ffffff,#c8c8c8)"></div>
<div class="a" style="left:233px;top:573px;width:7px;height:1px;background:#000"></div><div class="a" style="left:236px;top:570px;width:1px;height:7px;background:#000"></div>
<div class="a" style="left:243px;top:568px;width:12px;height:12px;background:linear-gradient(#ffffff,#c8c8c8)"></div>
<svg class="a" style="left:248px;top:569px" width="6" height="10"><polygon points="5.5,0.5 5.5,9.5 1,5" fill="#000"/></svg>
<div class="a" style="left:259px;top:568px;width:98px;height:11px;border-radius:5px;background:linear-gradient(#ffffff 0%,#f6f6f6 40%,#d6d6d6 100%)"></div>
<div class="a" style="left:305px;top:570px;width:1px;height:8px;background:#777"></div><div class="a" style="left:308px;top:570px;width:1px;height:8px;background:#777"></div><div class="a" style="left:311px;top:570px;width:1px;height:8px;background:#777"></div>
<div class="a" style="left:1153px;top:568px;width:14px;height:12px;box-sizing:border-box;border-right:1px solid #9a9a9a;background:linear-gradient(#ffffff,#c8c8c8)"></div>
<svg class="a" style="left:1156px;top:569px" width="6" height="10"><polygon points="0.5,0.5 0.5,9.5 5,5" fill="#000"/></svg>
<div class="a" style="left:8px;top:603px;width:1163px;height:1px;background:#fdfdfd"></div><div class="a" style="left:8px;top:586px;width:1px;height:18px;background:#fdfdfd"></div>
<div class="a" style="left:9px;top:586px;width:1161px;height:1px;background:#a0a0a0"></div>
<div class="a" style="left:9px;top:587px;width:1px;height:16px;background:#a0a0a0"></div>
<div class="a" style="left:88px;top:587px;width:1px;height:16px;background:#a0a0a0"></div>
<div class="a" style="left:1066px;top:587px;width:1px;height:16px;background:#a0a0a0"></div>
<div class="a" style="left:1164px;top:592px;width:2px;height:2px;background:#8a8a8a"></div>
<div class="a" style="left:1160px;top:596px;width:2px;height:2px;background:#8a8a8a"></div>
<div class="a" style="left:1164px;top:596px;width:2px;height:2px;background:#8a8a8a"></div>
<div class="a" style="left:1156px;top:600px;width:2px;height:2px;background:#8a8a8a"></div>
<div class="a" style="left:1160px;top:600px;width:2px;height:2px;background:#8a8a8a"></div>
<div class="a" style="left:1164px;top:600px;width:2px;height:2px;background:#8a8a8a"></div>
</body></html>
